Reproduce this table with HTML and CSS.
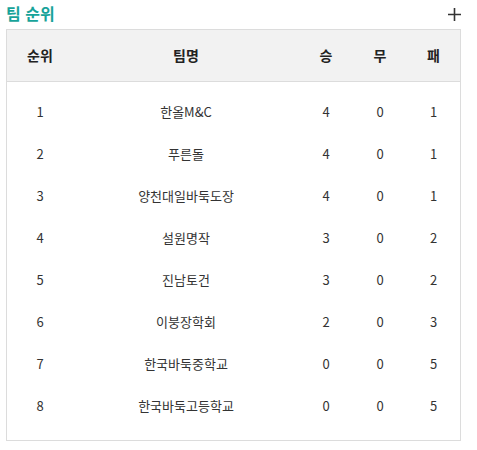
FILE: index.html
```html
<!DOCTYPE html>
<html lang="ko">
<head>
<meta charset="utf-8">
<link rel="stylesheet" href="styles.css">
</head>
<body>
<section class="panel">
  <div class="panel-head">
    <h2 class="title">팀 순위</h2>
    <svg class="more" width="13" height="13" viewBox="0 0 13 13"><path d="M6.5 0V13M0 6.5H13" stroke="#333" stroke-width="1.6" fill="none"/></svg>
  </div>
  <div class="box">
    <table class="rank">
      <colgroup>
        <col class="c1"><col class="c2"><col class="c3"><col class="c4"><col class="c5">
      </colgroup>
      <thead>
        <tr><th>순위</th><th>팀명</th><th>승</th><th>무</th><th>패</th></tr>
      </thead>
      <tbody>
        <tr><td>1</td><td>한올M&amp;C</td><td>4</td><td>0</td><td>1</td></tr>
        <tr><td>2</td><td>푸른돌</td><td>4</td><td>0</td><td>1</td></tr>
        <tr><td>3</td><td>양천대일바둑도장</td><td>4</td><td>0</td><td>1</td></tr>
        <tr><td>4</td><td>설원명작</td><td>3</td><td>0</td><td>2</td></tr>
        <tr><td>5</td><td>진남토건</td><td>3</td><td>0</td><td>2</td></tr>
        <tr><td>6</td><td>이붕장학회</td><td>2</td><td>0</td><td>3</td></tr>
        <tr><td>7</td><td>한국바둑중학교</td><td>0</td><td>0</td><td>5</td></tr>
        <tr><td>8</td><td>한국바둑고등학교</td><td>0</td><td>0</td><td>5</td></tr>
      </tbody>
    </table>
  </div>
</section>
</body>
</html>
```
FILE: styles.css
```css
* { box-sizing: border-box; }
html, body { margin: 0; padding: 0; background: #fff; }
body {
  font-family: "Noto Sans CJK KR", "Noto Sans", sans-serif;
  color: #333;
}
.panel {
  width: 455px;
  margin-left: 6px;
}
.panel-head {
  height: 29px;
  display: flex;
  justify-content: space-between;
  align-items: flex-start;
}
.title {
  margin: 0;
  font-size: 16px;
  line-height: 26px;
  font-weight: 700;
  color: #17a39a;
}
.more {
  display: block;
  margin-top: 8px;
}
.box {
  border: 1px solid #dcdcdc;
  padding-bottom: 13px;
}
.rank {
  width: 100%;
  border-collapse: collapse;
  table-layout: fixed;
  font-size: 13px;
}
.c1 { width: 66px; }
.c2 { width: 226px; }
.c3 { width: 54px; }
.c4 { width: 54px; }
.c5 { width: 53px; }
.rank th {
  height: 51px;
  background: #f2f2f2;
  border-bottom: 1px solid #dcdcdc;
  font-weight: 700;
  color: #222;
  font-size: 14px;
  text-align: center;
  padding: 0;
}
.rank td {
  height: 42px;
  text-align: center;
  padding: 0;
  line-height: 18px;
}
.rank tbody::before {
  content: "";
  display: block;
  height: 9px;
}
```
